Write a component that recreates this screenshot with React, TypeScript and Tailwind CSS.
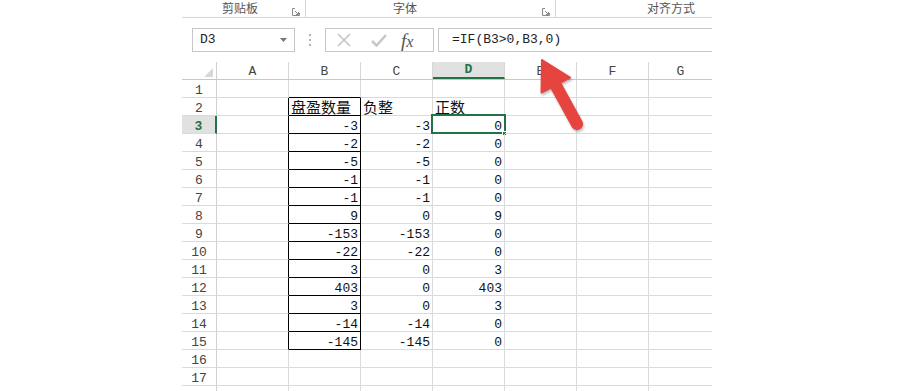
import React from 'react';

const MONO = "font-['Liberation_Mono','DejaVu_Sans_Mono',monospace]";
const CJK = "font-['Noto_Sans_CJK_SC','Noto_Sans',sans-serif]";

// B, C, D values for rows 3..15
const values: [string, string, string][] = [
  ['-3', '-3', '0'],
  ['-2', '-2', '0'],
  ['-5', '-5', '0'],
  ['-1', '-1', '0'],
  ['-1', '-1', '0'],
  ['9', '0', '9'],
  ['-153', '-153', '0'],
  ['-22', '-22', '0'],
  ['3', '0', '3'],
  ['403', '0', '403'],
  ['3', '0', '3'],
  ['-14', '-14', '0'],
  ['-145', '-145', '0'],
];

const cols = ['A', 'B', 'C', 'D', 'E', 'F', 'G'];

const Launcher = () => (
  <svg width="8" height="8" viewBox="0 0 8 8" className="mt-[8px]">
    <path d="M0.5 0.5 H3 M0.5 0.5 V7.5 H7.5 V5" stroke="#8a8a8a" strokeWidth="1" fill="none" />
    <path d="M3 3 L6.5 6.5 M6.5 4 V6.5 H4" stroke="#8a8a8a" strokeWidth="1" fill="none" />
  </svg>
);

const Cell: React.FC<{
  col: number;
  row: number;
  children?: React.ReactNode;
  align?: 'left' | 'right';
  cjk?: boolean;
}> = ({ col, row, children, align = 'right', cjk }) => {
  const inRange = col === 1 && row >= 2 && row <= 15;
  const rightBlack = inRange || (col === 0 && row >= 2 && row <= 15);
  const bottomBlack = col === 1 && row >= 1 && row <= 15;
  const w = col === 6 ? 'w-[63px]' : 'w-[72px]';
  const br = col === 6 ? '' : rightBlack ? 'border-r border-r-black' : 'border-r border-r-[#dadada]';
  const bb = bottomBlack ? 'border-b-black' : 'border-b-[#dadada]';
  const selected = col === 3 && row === 3;
  return (
    <div
      className={`relative ${w} h-[18px] shrink-0 border-b ${bb} ${br} flex items-end ${
        align === 'right' ? 'justify-end pr-[2px]' : 'justify-start pl-[2px]'
      }`}
    >
      {children != null && (
        <span
          className={
            cjk
              ? `${CJK} text-[15px] leading-[16px] text-[#111]`
              : `${MONO} text-[13px] leading-[12px] text-[#111]`
          }
        >
          {children}
        </span>
      )}
      {selected && (
        <>
          <div className="absolute left-[-2px] top-[-2px] w-[75px] h-[20px] border-2 border-[#217346]" />
          <div className="absolute left-[69px] top-[15px] w-[5px] h-[5px] bg-[#217346] border border-white" />
        </>
      )}
    </div>
  );
};

export default function App() {
  const rows = Array.from({ length: 18 }, (_, i) => i + 1);

  const cellContent = (row: number, col: number): { text?: string; align?: 'left' | 'right'; cjk?: boolean } => {
    if (row === 2) {
      if (col === 1) return { text: '盘盈数量', align: 'left', cjk: true };
      if (col === 2) return { text: '负整', align: 'left', cjk: true };
      if (col === 3) return { text: '正数', align: 'left', cjk: true };
    }
    if (row >= 3 && row <= 15 && col >= 1 && col <= 3) {
      return { text: values[row - 3][col - 1] };
    }
    return {};
  };

  return (
    <div className="relative w-[900px] h-[391px] bg-white overflow-hidden">
      <div className="ml-[182px] w-[530px] flex flex-col">
        {/* ribbon group labels */}
        <div className="h-[18px] flex border-b border-[#d6d6d6]">
          <div className="w-[124px] flex border-r border-[#d6d6d6] h-[17px]">
            <span className={`${CJK} text-[12px] leading-[16px] text-[#555] pl-[40px]`}>剪贴板</span>
            <div className="ml-auto mr-[5px]">
              <Launcher />
            </div>
          </div>
          <div className="w-[250px] flex border-r border-[#d6d6d6] h-[17px]">
            <span className={`${CJK} text-[12px] leading-[16px] text-[#555] pl-[87px]`}>字体</span>
            <div className="ml-auto mr-[5px]">
              <Launcher />
            </div>
          </div>
          <div className="flex-1 flex h-[17px]">
            <span className={`${CJK} text-[12px] leading-[16px] text-[#555] pl-[91px]`}>对齐方式</span>
          </div>
        </div>

        {/* formula bar */}
        <div className="h-[44px] flex items-start pt-[10px]">
          <div className="ml-[10px] w-[103px] h-[24px] border border-[#c6c6c6] flex items-center pl-[7px] pr-[7px]">
            <span className={`${MONO} text-[13px] text-[#222]`}>D3</span>
            <svg width="7" height="4" viewBox="0 0 7 4" className="ml-auto">
              <path d="M0 0 H7 L3.5 4 Z" fill="#777" />
            </svg>
          </div>
          <div className="ml-[14px] mt-[6px] flex flex-col gap-[3px]">
            <div className="w-[2px] h-[2px] bg-[#b0b0b0]" />
            <div className="w-[2px] h-[2px] bg-[#b0b0b0]" />
            <div className="w-[2px] h-[2px] bg-[#b0b0b0]" />
          </div>
          <div className="ml-[14px] w-[109px] h-[24px] border border-[#c6c6c6] flex items-center">
            <svg width="14" height="14" viewBox="0 0 14 14" className="ml-[11px]">
              <path d="M1 1 L13 13 M13 1 L1 13" stroke="#c3c3c3" strokeWidth="1.6" fill="none" />
            </svg>
            <svg width="16" height="13" viewBox="0 0 16 13" className="ml-[20px]">
              <path d="M1 7 L5.5 11.5 L15 1" stroke="#c8c8c8" strokeWidth="2.6" fill="none" />
            </svg>
            <span className="ml-[14px] font-['Liberation_Serif',serif] italic text-[19px] leading-none text-[#555]">
              f<span className="text-[16px]">x</span>
            </span>
          </div>
          <div className="ml-[4px] flex-1 h-[24px] border-t border-b border-l border-[#c6c6c6] flex items-center pl-[13px]">
            <span className={`${MONO} text-[13px] text-[#222]`}>=IF(B3&gt;0,B3,0)</span>
          </div>
        </div>

        {/* column headers */}
        <div className="h-[18px] flex border-b border-[#c8c8c8]">
          <div className="w-[35px] h-[17px] shrink-0 border-r border-[#d0d0d0] flex items-end justify-end pr-[3px] pb-[2px]">
            <svg width="9" height="9" viewBox="0 0 9 9">
              <path d="M9 0 L9 9 L0 9 Z" fill="#d8d8d8" />
            </svg>
          </div>
          {cols.map((c, i) => {
            const active = c === 'D';
            return (
              <div
                key={c}
                className={`${i === 6 ? 'w-[63px]' : 'w-[72px] border-r border-[#d6d6d6]'} h-[17px] shrink-0 flex items-end justify-center ${
                  active ? 'bg-[#e1e1e1] border-b-2 border-b-[#217346]' : ''
                }`}
              >
                <span
                  className={`${MONO} text-[13px] leading-[14px] ${
                    active ? 'font-bold text-[#217346]' : 'text-[#444]'
                  }`}
                >
                  {c}
                </span>
              </div>
            );
          })}
        </div>

        {/* rows */}
        {rows.map((r) => {
          const active = r === 3;
          return (
            <div key={r} className="flex">
              <div
                className={`w-[35px] h-[18px] shrink-0 border-b border-b-[#dadada] flex items-end justify-center ${
                  active ? 'bg-[#e1e1e1] border-r-2 border-r-[#217346]' : 'border-r border-r-[#d0d0d0]'
                }`}
              >
                {r <= 17 && (
                  <span
                    className={`${MONO} text-[13px] leading-[12px] ${
                      active ? 'text-[#217346] font-bold' : 'text-[#444]'
                    }`}
                  >
                    {r}
                  </span>
                )}
              </div>
              {cols.map((c, ci) => {
                const cc = cellContent(r, ci);
                return (
                  <Cell key={c} col={ci} row={r} align={cc.align} cjk={cc.cjk}>
                    {cc.text}
                  </Cell>
                );
              })}
            </div>
          );
        })}
      </div>

      {/* red annotation arrow */}
      <svg
        className="absolute left-0 top-0 pointer-events-none drop-shadow-[1px_2px_1px_rgba(0,0,0,0.25)]"
        width="900"
        height="391"
        viewBox="0 0 900 391"
      >
        <line x1="555" y1="84" x2="577" y2="124" stroke="#e5443f" strokeWidth="12" strokeLinecap="round" />
        <polygon points="542,60 541.5,92.5 570,77.5" fill="#e5443f" stroke="#e5443f" strokeWidth="2" strokeLinejoin="round" />
      </svg>
    </div>
  );
}
